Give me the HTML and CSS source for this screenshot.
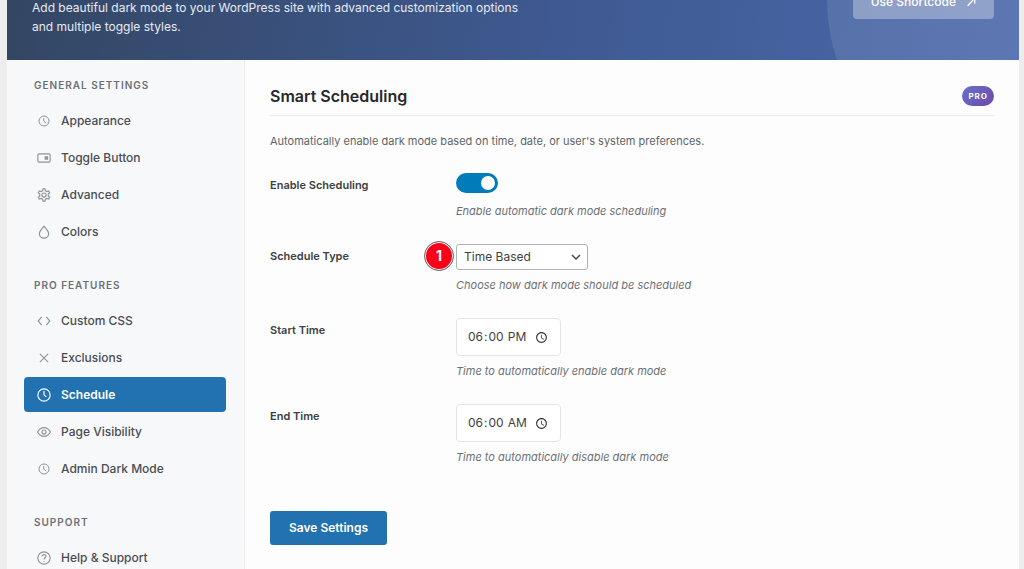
FILE: index.html
```html
<!DOCTYPE html>
<html lang="en">
<head>
    <meta charset="UTF-8">
    <meta name="viewport" content="width=device-width, initial-scale=1.0">
    <title>Dark Mode Settings</title>
    <link rel="stylesheet" href="styles.css">
</head>
<body>
    <div class="page">
        <header class="header">
            <p class="header-text">Add beautiful dark mode to your WordPress site with advanced customization options and multiple toggle styles.</p>
            <a href="#" class="shortcode-btn">
                Use Shortcode
                <svg class="arrow" viewBox="0 0 12 12"><path d="M2 10.5 10 2M4 1.5h6.500V8"/></svg>
            </a>
        </header>
        <div class="content">
            <nav class="sidebar">
                <h2>General Settings</h2>
                <ul>
                    <li><a href="#">
                        <svg class="small" viewBox="0 0 24 24"><circle cx="12" cy="12" r="10"/><path d="M11.500 6v6l4 4"/></svg>
                        Appearance</a></li>
                    <li><a href="#">
                        <svg viewBox="0 0 24 24"><rect x="1.500" y="5" width="21" height="14" rx="2"/><path class="fill" d="M13 9h6v6h-6z"/></svg>
                        Toggle Button</a></li>
                    <li><a href="#">
                        <svg viewBox="0 0 24 24"><path d="M9.600 4.800 10.300 1.500h3.400l.7 3.300 2.500 1.400 3.200-1 1.700 3-2.500 2.300v3l2.500 2.300-1.700 3-3.200-1-2.500 1.400-.7 3.300h-3.400l-.7-3.300-2.500-1.400-3.200 1-1.700-3 2.500-2.300v-3L2.200 8.200l1.700-3 3.200 1z"/><circle cx="12" cy="12" r="3.500"/></svg>
                        Advanced</a></li>
                    <li><a href="#">
                        <svg viewBox="0 0 24 24"><path d="M12 2C9 6 4 10 4 14.500a8 8 0 0 0 16 0C20 10 15 6 12 2z"/></svg>
                        Colors</a></li>
                </ul>
                <h2>Pro Features</h2>
                <ul>
                    <li><a href="#">
                        <svg viewBox="0 0 24 24"><path d="M8 5l-6 7 6 7M16 5l6 7-6 7"/></svg>
                        Custom CSS</a></li>
                    <li><a href="#">
                        <svg viewBox="0 0 24 24"><path d="M5 5l14 14M19 5 5 19"/></svg>
                        Exclusions</a></li>
                    <li><a href="#" class="active">
                        <svg viewBox="0 0 24 24"><circle cx="12" cy="12" r="10.500"/><path d="M12 5v7l4 3"/></svg>
                        Schedule</a></li>
                    <li><a href="#">
                        <svg viewBox="0 0 24 24"><path d="M1 12s4-7.500 11-7.500S23 12 23 12s-4 7.500-11 7.500S1 12 1 12z"/><circle cx="12" cy="12" r="3.500"/></svg>
                        Page Visibility</a></li>
                    <li><a href="#">
                        <svg class="small" viewBox="0 0 24 24"><circle cx="12" cy="12" r="10"/><path d="M11.500 6v6l4 4"/></svg>
                        Admin Dark Mode</a></li>
                </ul>
                <h2>Support</h2>
                <ul>
                    <li><a href="#">
                        <svg viewBox="0 0 24 24"><circle cx="12" cy="12" r="10.500"/><path d="M8.700 9.500c0-4.500 6.800-4.200 6.600-.3C15.200 11.500 12 11.800 12 14.500M12 17v1.500"/></svg>
                        Help &amp; Support</a></li>
                </ul>
            </nav>
            <main class="main">
                <div class="title-row">
                    <h1>Smart Scheduling</h1>
                    <span class="pro">PRO</span>
                </div>
                <p class="description">Automatically enable dark mode based on time, date, or user's system preferences.</p>
                <form>
                    <div class="row">
                        <label for="enable">Enable Scheduling</label>
                        <div class="field">
                            <input type="checkbox" id="enable" class="toggle" checked>
                            <p class="help">Enable automatic dark mode scheduling</p>
                        </div>
                    </div>
                    <div class="row">
                        <label for="type">Schedule Type</label>
                        <div class="field">
                            <div class="select-box">
                                <span class="step">1</span>
                                <select id="type">
                                    <option>Time Based</option>
                                </select>
                                <svg class="chevron" viewBox="0 0 10 10"><path d="M1 3l4 4 4-4"/></svg>
                            </div>
                            <p class="help">Choose how dark mode should be scheduled</p>
                        </div>
                    </div>
                    <div class="row">
                        <label for="start">Start Time</label>
                        <div class="field">
                            <input type="time" id="start" value="18:00">
                            <p class="help">Time to automatically enable dark mode</p>
                        </div>
                    </div>
                    <div class="row">
                        <label for="end">End Time</label>
                        <div class="field">
                            <input type="time" id="end" value="06:00">
                            <p class="help">Time to automatically disable dark mode</p>
                        </div>
                    </div>
                    <button type="submit" class="save">Save Settings</button>
                </form>
            </main>
        </div>
    </div>
</body>
</html>
```
FILE: styles.css
```css
* {
    box-sizing: border-box;
}
body {
    margin: 0;
    background-color: #ededee;
    font-family: Inter, "Liberation Sans", sans-serif;
    font-size: 12px;
    line-height: 16px;
    color: #3c3f43;
}
h1, h2, p, ul {
    margin: 0;
    padding: 0;
}
.page {
    margin: 0 5px 0 7px;
    min-height: 100vh;
    display: flex;
    flex-direction: column;
}
.header {
    position: relative;
    height: 60px;
    overflow: hidden;
    display: flex;
    justify-content: space-between;
    align-items: flex-end;
    padding: 0 25px 24px;
    background: linear-gradient(100deg, #334663 0%, #3f5a92 55%, #4a68ab 100%);
}
/* pale circle in the corner of the banner */
.header::before {
    content: "";
    position: absolute;
    right: -178px;
    top: -185px;
    width: 370px;
    height: 370px;
    border-radius: 50%;
    background: rgba(255, 255, 255, 0.1);
}
.header-text {
    max-width: 510px;
    color: #e6ebf3;
    font-size: 12px;
    line-height: 19px;
}
.shortcode-btn {
    position: relative;
    display: flex;
    align-items: center;
    gap: 10px;
    height: 34px;
    margin-bottom: 17px;
    padding: 0 18px;
    border-radius: 4px;
    background: rgba(255, 255, 255, 0.32);
    color: #fff;
    font-weight: 500;
    text-decoration: none;
}
.arrow {
    width: 10px;
    height: 10px;
    fill: none;
    stroke: currentColor;
    stroke-width: 1.5;
}
.content {
    flex: 1;
    display: flex;
}
.sidebar {
    width: 238px;
    flex-shrink: 0;
    padding: 17px 18px 0 17px;
    background-color: #f7f8fa;
    border-right: 1px solid #ebecee;
}
.sidebar h2 {
    padding-left: 10px;
    margin-bottom: 10px;
    font-size: 10px;
    line-height: 16px;
    font-weight: 600;
    letter-spacing: 1px;
    text-transform: uppercase;
    color: #6c7076;
}
.sidebar ul {
    list-style: none;
    display: flex;
    flex-direction: column;
    gap: 2px;
    margin-bottom: 28px;
}
.sidebar a {
    display: flex;
    align-items: center;
    gap: 10px;
    height: 35px;
    padding: 0 13px;
    border-radius: 4px;
    color: #4a4d52;
    font-weight: 500;
    text-decoration: none;
}
.sidebar svg {
    width: 14px;
    height: 14px;
    fill: none;
    stroke: #919498;
    stroke-width: 2;
}
.sidebar svg.small {
    padding: 1px;
}
.sidebar svg .fill {
    fill: #919498;
    stroke: none;
}
.sidebar a.active {
    background-color: #2271b1;
    color: #fff;
    font-weight: 600;
}
.sidebar .active svg {
    stroke: #fff;
}
.main {
    flex: 1;
    padding: 25px;
    background-color: #fdfdfd;
}
.title-row {
    display: flex;
    justify-content: space-between;
    align-items: center;
    height: 31px;
    padding-bottom: 8px;
    border-bottom: 1px solid #eeeff0;
}
h1 {
    font-size: 16px;
    line-height: 22px;
    font-weight: 600;
    color: #26282b;
}
.pro {
    padding: 2px 6px;
    border-radius: 10px;
    background: linear-gradient(135deg, #6470cf, #7049a6);
    color: #fff;
    font-size: 8px;
    font-weight: 700;
    letter-spacing: 1px;
}
.description {
    margin: 17px 0 24px;
    font-size: 11px;
    color: #606468;
}
.row {
    display: flex;
    margin-bottom: 25px;
}
.row label {
    width: 186px;
    padding-top: 4px;
    font-size: 11px;
    font-weight: 600;
}
.field {
    display: flex;
    flex-direction: column;
    align-items: flex-start;
    gap: 7px;
}
.help {
    font-size: 11px;
    font-style: italic;
    color: #6c7075;
}
.toggle {
    appearance: none;
    width: 42px;
    height: 20px;
    margin: 0 0 3px;
    padding: 3px;
    border-radius: 10px;
    background-color: #b5b8bc;
}
.toggle::before {
    content: "";
    display: block;
    width: 14px;
    height: 14px;
    border-radius: 50%;
    background-color: #fff;
}
.toggle:checked {
    background-color: #007cba;
}
.toggle:checked::before {
    margin-left: auto;
}
.select-box {
    position: relative;
}
select {
    appearance: none;
    display: block;
    width: 132px;
    height: 26px;
    padding: 0 7px;
    border: 1px solid #b0b2b5;
    border-radius: 3px;
    background-color: #fff;
    color: #3c3f43;
    font: inherit;
}
.chevron {
    position: absolute;
    right: 7px;
    top: 8px;
    width: 10px;
    height: 10px;
    fill: none;
    stroke: #45484c;
    stroke-width: 1.5;
    pointer-events: none;
}
/* numbered marker beside the select */
.step {
    position: absolute;
    left: -32px;
    top: -3px;
    width: 30px;
    height: 30px;
    border: 1px solid #77777a;
    border-radius: 50%;
    background-color: #fa0019;
    box-shadow: inset 0 0 0 1px #fff;
    color: #fff;
    font-size: 14px;
    line-height: 28px;
    font-weight: 700;
    text-align: center;
}
input[type="time"] {
    width: 105px;
    height: 38px;
    padding: 0 12px 0 10px;
    border: 1px solid #e4e5e7;
    border-radius: 4px;
    background-color: #fff;
    color: #3c3f43;
    font: inherit;
}
input[type="time"]::-webkit-calendar-picker-indicator {
    width: 13px;
    height: 13px;
    margin-left: 8px;
    padding: 0;
    opacity: 0.8;
}
.save {
    display: block;
    height: 34px;
    margin-top: 46px;
    padding: 0 19px;
    border: none;
    border-radius: 3px;
    background-color: #2271b1;
    color: #fff;
    font: inherit;
    font-weight: 600;
}
```
